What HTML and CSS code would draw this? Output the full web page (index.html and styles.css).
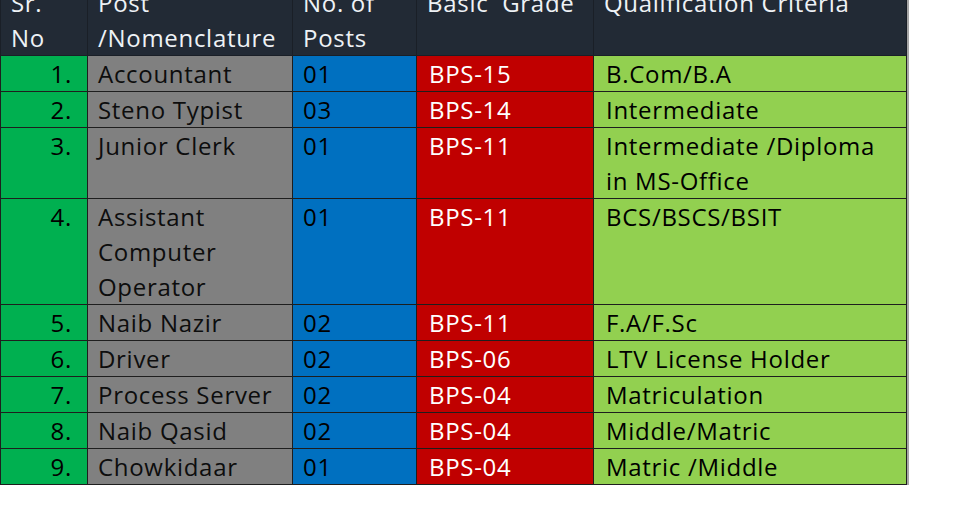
FILE: index.html
```html
<!DOCTYPE html>
<html lang="en">
<head>
    <meta charset="UTF-8">
    <title>Posts</title>
    <link rel="stylesheet" href="styles.css">
</head>
<body>
    <table class="posts">
        <thead>
            <tr>
                <th class="col-sr">Sr.<br>No</th>
                <th class="col-post">Post<br>/Nomenclature</th>
                <th class="col-no">No. of<br>Posts</th>
                <th class="col-grade">Basic&nbsp; Grade</th>
                <th class="col-qual">Qualification Criteria</th>
            </tr>
        </thead>
        <tbody>
            <tr>
                <td class="sr">1.</td><td class="post">Accountant</td><td class="no">01</td>
                <td class="grade">BPS-15</td><td class="qual">B.Com/B.A</td>
            </tr>
            <tr>
                <td class="sr">2.</td><td class="post">Steno Typist</td><td class="no">03</td>
                <td class="grade">BPS-14</td><td class="qual">Intermediate</td>
            </tr>
            <tr>
                <td class="sr">3.</td><td class="post">Junior Clerk</td><td class="no">01</td>
                <td class="grade">BPS-11</td><td class="qual">Intermediate /Diploma<br>in MS-Office</td>
            </tr>
            <tr>
                <td class="sr">4.</td><td class="post">Assistant<br>Computer<br>Operator</td><td class="no">01</td>
                <td class="grade">BPS-11</td><td class="qual">BCS/BSCS/BSIT</td>
            </tr>
            <tr>
                <td class="sr">5.</td><td class="post">Naib Nazir</td><td class="no">02</td>
                <td class="grade">BPS-11</td><td class="qual">F.A/F.Sc</td>
            </tr>
            <tr>
                <td class="sr">6.</td><td class="post">Driver</td><td class="no">02</td>
                <td class="grade">BPS-06</td><td class="qual">LTV License Holder</td>
            </tr>
            <tr>
                <td class="sr">7.</td><td class="post">Process Server</td><td class="no">02</td>
                <td class="grade">BPS-04</td><td class="qual">Matriculation</td>
            </tr>
            <tr>
                <td class="sr">8.</td><td class="post">Naib Qasid</td><td class="no">02</td>
                <td class="grade">BPS-04</td><td class="qual">Middle/Matric</td>
            </tr>
            <tr>
                <td class="sr">9.</td><td class="post">Chowkidaar</td><td class="no">01</td>
                <td class="grade">BPS-04</td><td class="qual">Matric /Middle</td>
            </tr>
        </tbody>
    </table>
</body>
</html>
```

FILE: styles.css
```css
body {
    margin: 0;
    background-color: #ffffff;
    font-family: 'Open Sans', 'Noto Sans', sans-serif;
}

.posts {
    border-collapse: collapse;
    table-layout: fixed;
    width: 906px;
    margin-top: -15px;
    font-size: 24px;
    line-height: 35px;
    letter-spacing: 0.7px;
    box-shadow: 2px 1px 0 #a6a6a6;
}

.posts th,
.posts td {
    box-sizing: border-box;
    padding: 0 8px 0 10px;
    text-align: left;
    vertical-align: top;
    font-weight: normal;
    border: 1px solid #1e1e1e;
    white-space: nowrap;
}

.posts th {
    background-color: #222a35;
    color: #eef2f6;
    border-color: #1a1f27;
    border-top: none;
}

.posts th.col-qual {
    border-left: 1px solid #8a9099;
}

.col-sr { width: 87px; }
.col-post { width: 205px; }
.col-no { width: 124px; }
.col-grade { width: 177px; }
.col-qual { width: 313px; }

.sr {
    background-color: #00b050;
    color: #000;
    text-align: right !important;
    padding-right: 15px !important;
}

.post {
    background-color: #808080;
    color: #0d0d0d;
}

.no {
    background-color: #0070c0;
    color: #000;
}

.grade {
    background-color: #c00000;
    color: #ffffff;
    padding-left: 12px !important;
}

.qual {
    background-color: #92d050;
    color: #000;
    padding-left: 12px !important;
}
```
